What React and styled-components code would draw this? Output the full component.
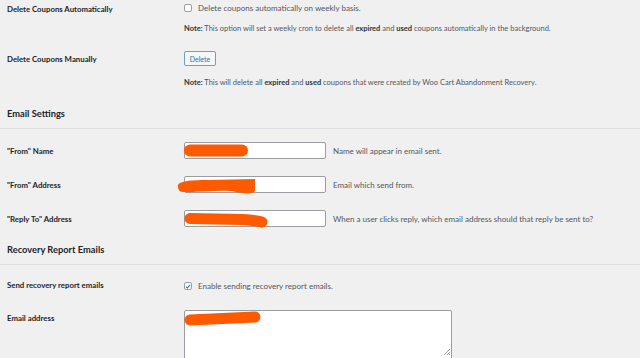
import React from 'react';
import styled, { createGlobalStyle } from 'styled-components';

const GlobalStyle = createGlobalStyle`
  html, body {
    margin: 0;
    padding: 0;
    background: #f0f0f1;
  }
  body {
    font-family: Lato, "Open Sans", sans-serif;
    color: #1d2327;
    width: 640px;
    height: 358px;
    overflow: hidden;
  }
`;

const Page = styled.div`
  padding-left: 7px;
`;

const Row = styled.div`
  display: flex;
  align-items: flex-start;
`;

const Label = styled.div`
  width: 177px;
  flex-shrink: 0;
  padding-top: ${p => p.$top}px;
  font-size: 7.8px;
  line-height: 10px;
  font-weight: 700;
  color: #1d2327;
`;

const Field = styled.div`
  padding-top: ${p => p.$top}px;
  padding-bottom: ${p => p.$bottom || 0}px;
  display: flex;
  flex-direction: column;
`;

const Inline = styled.div`
  display: flex;
  align-items: center;
`;

const CheckBox = styled.span`
  width: 8px;
  height: 8px;
  box-sizing: border-box;
  border: 1px solid #9a9da2;
  border-radius: 2px;
  background: #fff;
  display: flex;
  align-items: center;
  justify-content: center;
  flex-shrink: 0;
`;

const CheckText = styled.span`
  margin-left: 6px;
  font-size: 8px;
  line-height: 10px;
  color: #50575e;
`;

const Note = styled.p`
  margin: ${p => p.$gap}px 0 0;
  font-size: 7.5px;
  line-height: 10px;
  color: #50575e;
  b { color: #2c3338; font-weight: 700; }
`;

const Button = styled.button`
  width: 32px;
  height: 15px;
  padding: 0;
  box-sizing: border-box;
  border: 1px solid #6d9fca;
  border-radius: 2px;
  background: #f6f7f7;
  color: #2271b1;
  font-family: inherit;
  font-size: 7px;
`;

const Heading = styled.h2`
  margin: ${p => p.$gap}px 0 0 -7px;
  padding: 0 0 7px 7px;
  border-bottom: 1px solid #e0e0e2;
  font-size: 9.3px;
  line-height: 14px;
  font-weight: 700;
  color: #1d2327;
`;

const InputWrap = styled.div`
  position: relative;
  width: 142px;
  height: 17px;
`;

const TextInput = styled.div`
  width: 100%;
  height: 100%;
  box-sizing: border-box;
  border: 1px solid #9a9da2;
  border-radius: 2px;
  background: #fff;
`;

const Scribble = styled.svg`
  position: absolute;
  left: 0;
  top: 0;
  overflow: visible;
`;

const Desc = styled.span`
  margin-left: 7px;
  font-size: 8px;
  line-height: 10px;
  color: #50575e;
`;

const AreaWrap = styled.div`
  position: relative;
  width: 268px;
  height: 60px;
`;

const Area = styled.div`
  width: 100%;
  height: 100%;
  box-sizing: border-box;
  border: 1px solid #9a9da2;
  border-radius: 2px;
  background: #fff;
`;

const Grip = styled.svg`
  position: absolute;
  right: 1px;
  bottom: 14px;
`;

const ORANGE = '#ff5a00';

function Redact({ d, width = 11, fill }) {
  return (
    <Scribble width="142" height="17">
      {fill ? (
        <path d={d} fill={ORANGE} />
      ) : (
        <path d={d} stroke={ORANGE} strokeWidth={width} strokeLinecap="round" fill="none" />
      )}
    </Scribble>
  );
}

function InputRow({ label, desc, redact }) {
  return (
    <Row>
      <Label $top={4 + 13}>{label}</Label>
      <Field $top={13} $bottom={4}>
        <Inline>
          <InputWrap>
            <TextInput />
            {redact}
          </InputWrap>
          <Desc>{desc}</Desc>
        </Inline>
      </Field>
    </Row>
  );
}

export default function App() {
  return (
    <>
      <GlobalStyle />
      <Page>
        <Row>
          <Label $top={4}>Delete Coupons Automatically</Label>
          <Field $top={3} $bottom={10}>
            <Inline>
              <CheckBox />
              <CheckText>Delete coupons automatically on weekly basis.</CheckText>
            </Inline>
            <Note $gap={11}>
              <b>Note:</b> This option will set a weekly cron to delete all <b>expired</b> and <b>used</b> coupons automatically in the background.
            </Note>
          </Field>
        </Row>
        <Row>
          <Label $top={10}>Delete Coupons Manually</Label>
          <Field $top={7}>
            <Inline>
              <Button>Delete</Button>
            </Inline>
            <Note $gap={12}>
              <b>Note:</b> This will delete all <b>expired</b> and <b>used</b> coupons that were created by Woo Cart Abandonment Recovery.
            </Note>
          </Field>
        </Row>

        <Heading $gap={19}>Email Settings</Heading>
        <InputRow
          label={'"From" Name'}
          desc="Name will appear in email sent."
          redact={<Redact d="M6 8.5 L58 8.5" width={12} />}
        />
        <InputRow
          label={'"From" Address'}
          desc="Email which send from."
          redact={
            <Redact
              fill
              d="M-6 10 C-6 5 6 4 24 4 L71 3 L71 14 C71 18 62 18 52 16 C38 13 14 17 -1 16 C-5 16 -6 13 -6 10 Z"
            />
          }
        />
        <InputRow
          label={'"Reply To" Address'}
          desc="When a user clicks reply, which email address should that reply be sent to?"
          redact={<Redact d="M6 8.5 L58 9.5 Q72 10.5 78 12" width={11} />}
        />

        <Heading $gap={12}>Recovery Report Emails</Heading>
        <Row>
          <Label $top={15}>Send recovery report emails</Label>
          <Field $top={16} $bottom={7}>
            <Inline>
              <CheckBox>
                <svg width="7" height="7" viewBox="0 0 7 7">
                  <path d="M1.2 3.6 L2.9 5.2 L5.9 1.4" stroke="#2271b1" strokeWidth="1.2" fill="none" />
                </svg>
              </CheckBox>
              <CheckText>Enable sending recovery report emails.</CheckText>
            </Inline>
          </Field>
        </Row>
        <Row>
          <Label $top={15}>Email address</Label>
          <Field $top={12}>
            <AreaWrap>
              <Area />
              <Redact d="M6 10 L71 7" width={11} />
              <Grip width="8" height="8" viewBox="0 0 8 8">
                <path d="M7 1 L1 7 M7 4 L4 7 M7 6 L6 7" stroke="#8c8f94" strokeWidth="0.8" />
              </Grip>
            </AreaWrap>
          </Field>
        </Row>
      </Page>
    </>
  );
}
